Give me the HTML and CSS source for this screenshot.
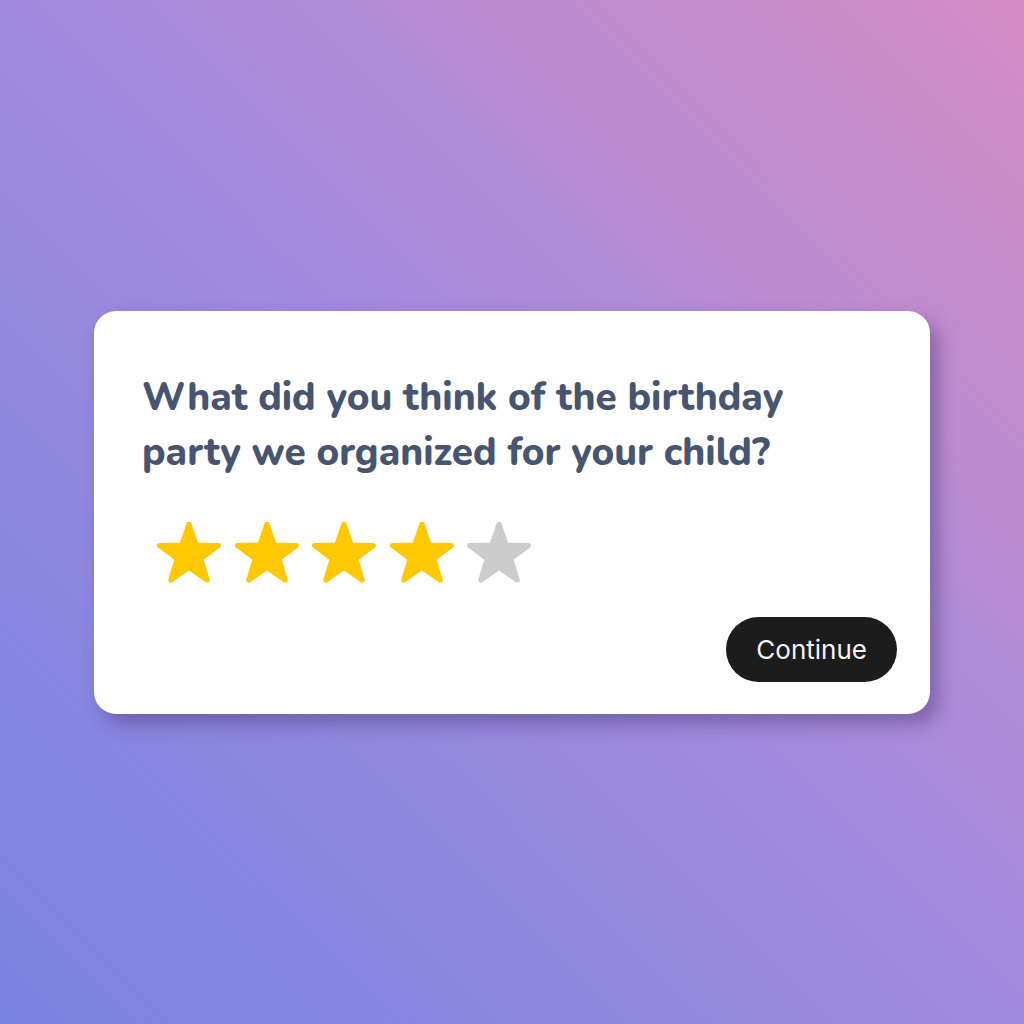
FILE: index.html
```html
<!DOCTYPE html>
<html lang="en">
<head>
<meta charset="utf-8">
<title>Rating</title>
<link rel="stylesheet" href="styles.css">
</head>
<body>
<main class="card">
  <h1 class="question">What did you think of the birthday party we organized for your child?</h1>
  <div class="stars">
    <svg class="star on" viewBox="0 0 64 62"><polygon points="32,2 39.29,22.97 61.48,23.42 43.79,36.83 50.22,58.08 32,45.4 13.78,58.08 20.21,36.83 2.52,23.42 24.71,22.97"/></svg>
    <svg class="star on" viewBox="0 0 64 62"><polygon points="32,2 39.29,22.97 61.48,23.42 43.79,36.83 50.22,58.08 32,45.4 13.78,58.08 20.21,36.83 2.52,23.42 24.71,22.97"/></svg>
    <svg class="star on" viewBox="0 0 64 62"><polygon points="32,2 39.29,22.97 61.48,23.42 43.79,36.83 50.22,58.08 32,45.4 13.78,58.08 20.21,36.83 2.52,23.42 24.71,22.97"/></svg>
    <svg class="star on" viewBox="0 0 64 62"><polygon points="32,2 39.29,22.97 61.48,23.42 43.79,36.83 50.22,58.08 32,45.4 13.78,58.08 20.21,36.83 2.52,23.42 24.71,22.97"/></svg>
    <svg class="star off" viewBox="0 0 64 62"><polygon points="32,2 39.29,22.97 61.48,23.42 43.79,36.83 50.22,58.08 32,45.4 13.78,58.08 20.21,36.83 2.52,23.42 24.71,22.97"/></svg>
  </div>
  <div class="actions">
    <button class="continue">Continue</button>
  </div>
</main>
</body>
</html>
```

FILE: styles.css
```css
html, body {
  margin: 0;
  height: 100%;
}
body {
  display: flex;
  align-items: center;
  justify-content: center;
  background: linear-gradient(45deg, #7884e2 0%, #a08ade 50%, #d58dc3 100%);
}
.card {
  box-sizing: border-box;
  width: 836px;
  background: #ffffff;
  border-radius: 22px;
  padding: 59px 33px 32px 48px;
  box-shadow: 8px 10px 18px rgba(70, 50, 110, 0.45);
}
.question {
  margin: 0;
  max-width: 680px;
  font-family: "Nunito", "Lato", "Open Sans", sans-serif;
  font-weight: 800;
  font-size: 38.7px;
  line-height: 55px;
  color: #475570;
}
.stars {
  display: flex;
  gap: 13.5px;
  margin: 42px 0 0 15px;
}
.star {
  width: 64px;
  height: 62px;
  display: block;
}
.star polygon {
  stroke-width: 5;
  stroke-linejoin: round;
}
.star.on polygon { fill: #ffc800; stroke: #ffc800; }
.star.off polygon { fill: #cccccc; stroke: #cccccc; }
.actions {
  display: flex;
  justify-content: flex-end;
  margin-top: 33px;
}
.continue {
  border: none;
  background: #1c1c1c;
  color: #f4f4f4;
  font-family: "Inter", "Liberation Sans", sans-serif;
  font-size: 26px;
  height: 65px;
  padding: 0 30px;
  border-radius: 33px;
}
```
